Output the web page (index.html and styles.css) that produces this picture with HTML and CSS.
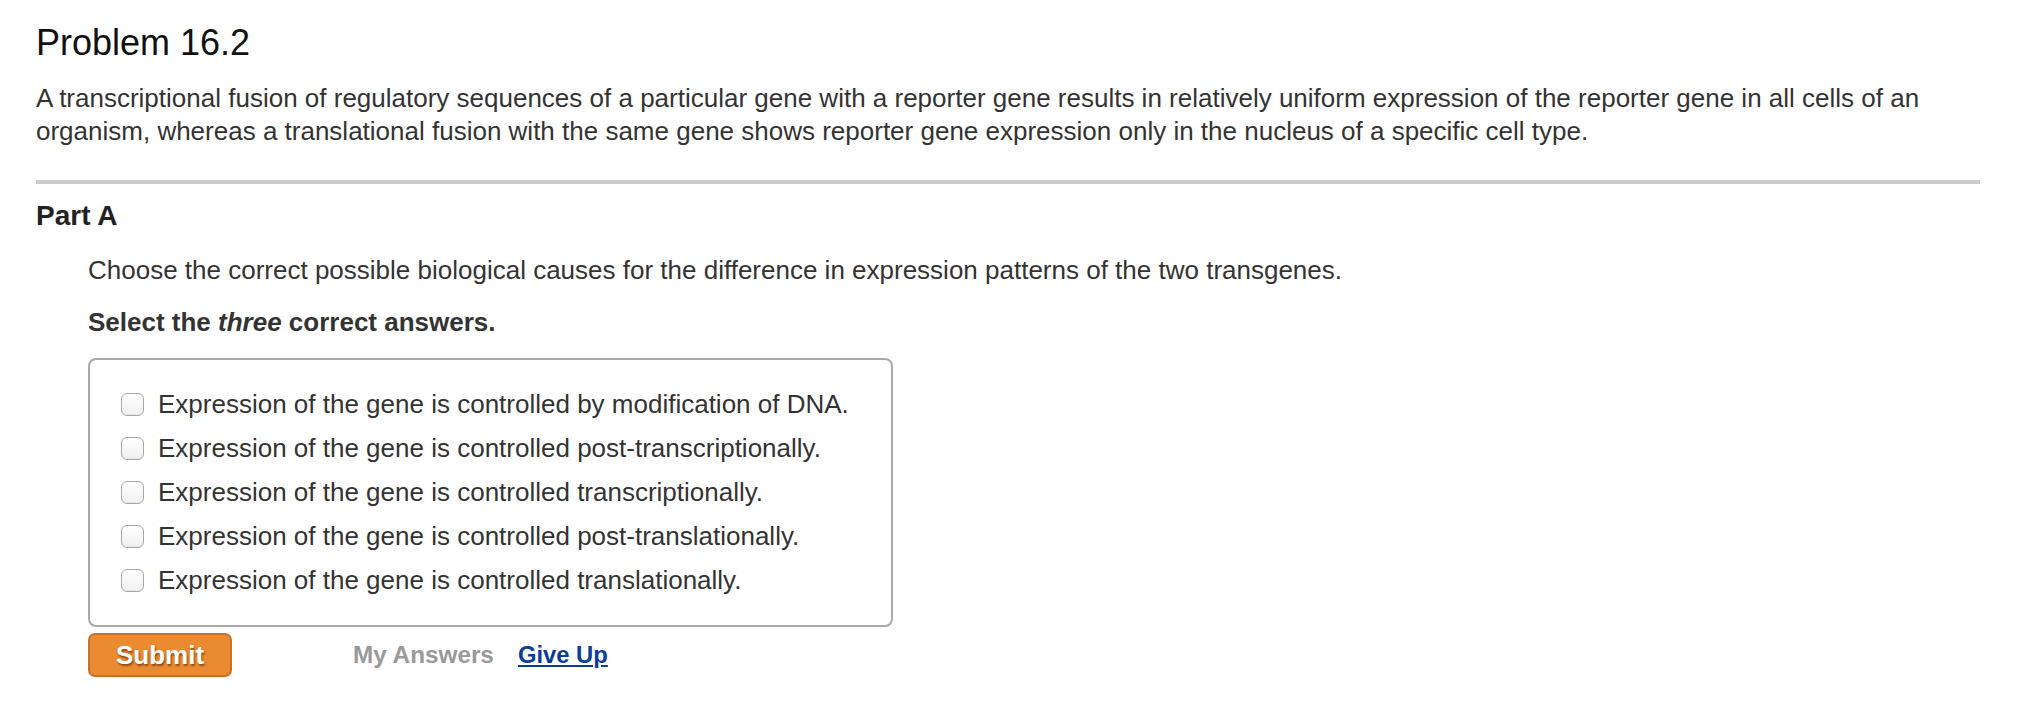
FILE: index.html
```html
<!DOCTYPE html>
<html lang="en">
<head>
<meta charset="utf-8">
<title>Problem 16.2</title>
<link rel="stylesheet" href="styles.css">
</head>
<body>
<div class="page">
  <h1 class="title">Problem 16.2</h1>
  <p class="intro">A transcriptional fusion of regulatory sequences of a particular gene with a reporter gene results in relatively uniform expression of the reporter gene in all cells of an organism, whereas a translational fusion with the same gene shows reporter gene expression only in the nucleus of a specific cell type.</p>
  <hr class="divider">
  <h2 class="part-title">Part A</h2>
  <div class="part-body">
    <p class="question">Choose the correct possible biological causes for the difference in expression patterns of the two transgenes.</p>
    <p class="instruction">Select the <em>three</em> correct answers.</p>
    <div class="answer-box">
      <label class="option"><input type="checkbox" class="check"><span>Expression of the gene is controlled by modification of DNA.</span></label>
      <label class="option"><input type="checkbox" class="check"><span>Expression of the gene is controlled post-transcriptionally.</span></label>
      <label class="option"><input type="checkbox" class="check"><span>Expression of the gene is controlled transcriptionally.</span></label>
      <label class="option"><input type="checkbox" class="check"><span>Expression of the gene is controlled post-translationally.</span></label>
      <label class="option"><input type="checkbox" class="check"><span>Expression of the gene is controlled translationally.</span></label>
    </div>
    <div class="actions">
      <button class="submit" type="button">Submit</button>
      <span class="my-answers">My Answers</span>
      <a class="give-up" href="#">Give Up</a>
    </div>
  </div>
</div>
</body>
</html>
```
FILE: styles.css
```css
html, body {
  margin: 0;
  padding: 0;
  background: #fff;
}

body {
  font-family: "Liberation Sans", Arial, Helvetica, sans-serif;
  color: #333;
}

.page {
  padding: 23px 48px 0 36px;
}

.title {
  margin: 0;
  font-size: 36px;
  line-height: 40px;
  font-weight: normal;
  color: #111;
}

.intro {
  margin: 19px 0 0;
  font-size: 26px;
  line-height: 33px;
  color: #333;
}

.divider {
  margin: 32px 0 0;
  border: 0;
  height: 4px;
  background: #cccccc;
}

.part-title {
  margin: 16px 0 0;
  font-size: 28px;
  line-height: 32px;
  font-weight: bold;
  color: #222;
}

.part-body {
  padding-left: 52px;
}

.question {
  margin: 22px 0 0;
  font-size: 26px;
  line-height: 32px;
  color: #333;
}

.instruction {
  margin: 20px 0 0;
  font-size: 26px;
  line-height: 32px;
  font-weight: bold;
  color: #333;
}

.instruction em {
  font-style: italic;
}

.answer-box {
  margin-top: 20px;
  width: 805px;
  box-sizing: border-box;
  border: 2px solid #a9a9a9;
  border-radius: 8px;
  padding: 22px 0 23px 31px;
  display: flex;
  flex-direction: column;
}

.option {
  display: flex;
  align-items: center;
  height: 44px;
  font-size: 26px;
  color: #333;
}

.check {
  -webkit-appearance: none;
  appearance: none;
  margin: 0 14px 0 0;
  width: 23px;
  height: 23px;
  box-sizing: border-box;
  border: 1.5px solid #a8a8a8;
  border-radius: 6px;
  background: linear-gradient(#ffffff, #f1f1f1);
  box-shadow: inset 0 -1px 1px rgba(0, 0, 0, 0.05);
}

.actions {
  margin-top: 6px;
  display: flex;
  align-items: center;
}

.submit {
  width: 144px;
  height: 44px;
  box-sizing: border-box;
  border: 2px solid #c97127;
  border-radius: 7px;
  background: #ea8b32;
  color: #fff;
  font-family: "Liberation Sans", Arial, Helvetica, sans-serif;
  font-size: 26px;
  font-weight: bold;
  text-shadow: 1px 2px 2px #8c4a12;
  padding: 0;
}

.my-answers {
  margin-left: 121px;
  font-size: 24.3px;
  font-weight: bold;
  color: #999;
}

.give-up {
  margin-left: 24px;
  font-size: 23.8px;
  font-weight: bold;
  color: #0b3c99;
  text-decoration: underline;
}
```
